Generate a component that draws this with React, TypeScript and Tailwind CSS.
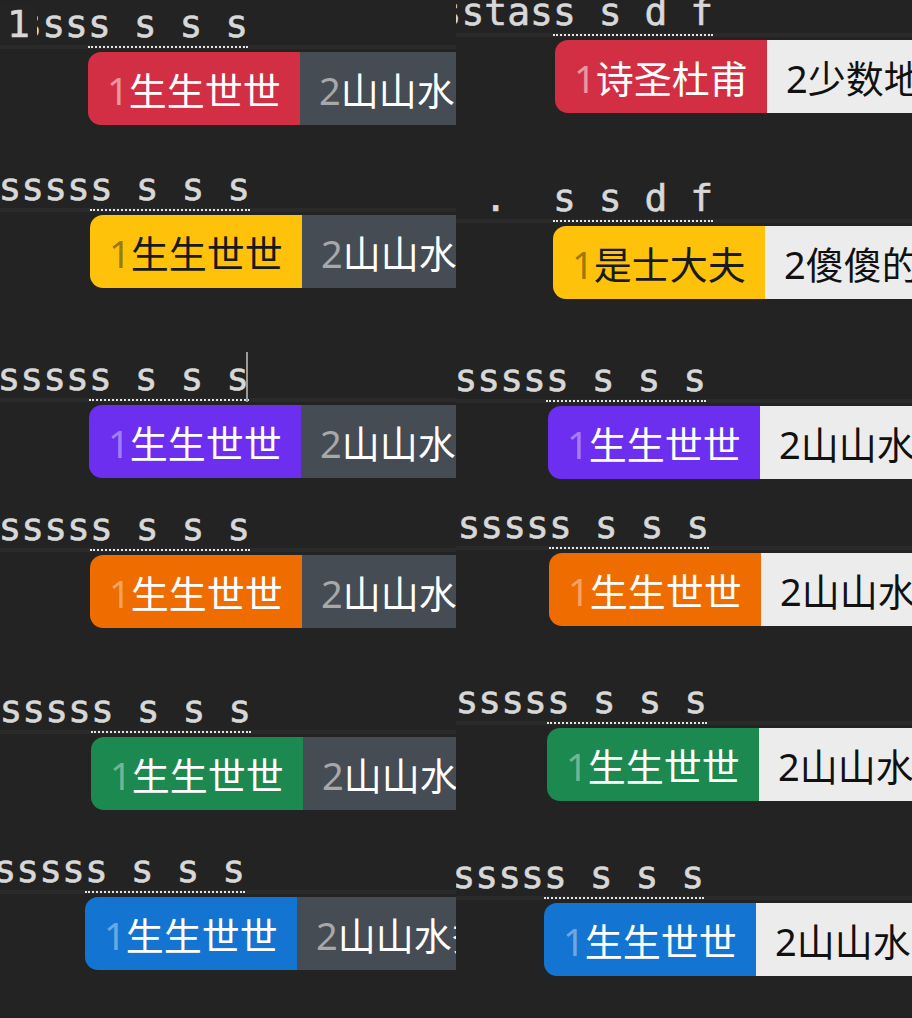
import React from 'react';

type Row = {
  gap: string;
  lead?: string;
  committed: string;
  preedit: string;
  textW: string;
  barX: string;
  hl: string;
  idx: string;
  word: string;
  first: string;
  second: string;
  cursor?: boolean;
};

const mono = { fontFamily: '"DejaVu Sans Mono", "Liberation Mono", monospace' };
const sans = { fontFamily: '"Noto Sans", "Noto Sans CJK SC", sans-serif' };

const left: Row[] = [
  { gap: 'mt-[5px]', lead: '1', committed: 'sss', preedit: 's s s s', textW: 'w-[51px]', barX: 'ml-[88px]', hl: 'bg-[#d32f44]', idx: 'text-white/50', word: 'text-white', first: '生生世世', second: '山山水秀' },
  { gap: 'mt-[43px]', committed: 'ssssss', preedit: 's s s s', textW: 'w-[90px]', barX: 'ml-[90px]', hl: 'bg-[#fec20b]', idx: 'text-black/40', word: 'text-[#1a1a1a]', first: '生生世世', second: '山山水秀' },
  { gap: 'mt-[70px]', committed: 'ssssss', preedit: 's s s s', textW: 'w-[89px]', barX: 'ml-[89px]', hl: 'bg-[#6c2ff0]', idx: 'text-white/40', word: 'text-white', first: '生生世世', second: '山山水秀', cursor: true },
  { gap: 'mt-[30px]', committed: 'ssssss', preedit: 's s s s', textW: 'w-[90px]', barX: 'ml-[90px]', hl: 'bg-[#ef6c00]', idx: 'text-white/40', word: 'text-white', first: '生生世世', second: '山山水秀' },
  { gap: 'mt-[62px]', committed: 'ssssss', preedit: 's s s s', textW: 'w-[91px]', barX: 'ml-[91px]', hl: 'bg-[#1c8951]', idx: 'text-white/40', word: 'text-white', first: '生生世世', second: '山山水秀' },
  { gap: 'mt-[40px]', committed: 'ssssss', preedit: 's s s s', textW: 'w-[85px]', barX: 'ml-[85px]', hl: 'bg-[#1375d1]', idx: 'text-white/40', word: 'text-white', first: '生生世世', second: '山山水秀' },
];

const right: Row[] = [
  { gap: '-mt-[7px]', committed: 'sstas', preedit: 's s d f', textW: 'w-[97px]', barX: 'ml-[99px]', hl: 'bg-[#d32f44]', idx: 'text-white/50', word: 'text-white', first: '诗圣杜甫', second: '少数地方' },
  { gap: 'mt-[66px]', committed: '.  ', preedit: 's s d f', textW: 'w-[97px]', barX: 'ml-[97px]', hl: 'bg-[#fec20b]', idx: 'text-black/40', word: 'text-[#1a1a1a]', first: '是士大夫', second: '傻傻的人' },
  { gap: 'mt-[60px]', committed: 'ssssss', preedit: 's s s s', textW: 'w-[90px]', barX: 'ml-[92px]', hl: 'bg-[#6c2ff0]', idx: 'text-white/40', word: 'text-white', first: '生生世世', second: '山山水秀' },
  { gap: 'mt-[27px]', committed: 'ssssss', preedit: 's s s s', textW: 'w-[93px]', barX: 'ml-[93px]', hl: 'bg-[#ef6c00]', idx: 'text-white/40', word: 'text-white', first: '生生世世', second: '山山水秀' },
  { gap: 'mt-[55px]', committed: 'ssssss', preedit: 's s s s', textW: 'w-[91px]', barX: 'ml-[91px]', hl: 'bg-[#1c8951]', idx: 'text-white/40', word: 'text-white', first: '生生世世', second: '山山水秀' },
  { gap: 'mt-[55px]', committed: 'ssssss', preedit: 's s s s', textW: 'w-[88px]', barX: 'ml-[88px]', hl: 'bg-[#1375d1]', idx: 'text-white/40', word: 'text-white', first: '生生世世', second: '山山水秀' },
];

function Cell({ row, light }: { row: Row; light: boolean }) {
  return (
    <div className={row.gap}>
      <div
        className="flex h-[38px] text-[38px] leading-[38px] text-[#d8d8d8] whitespace-pre [-webkit-text-stroke:0.6px_#d8d8d8]"
        style={mono}
      >
        {row.lead && <div className="w-[37px] shrink-0 pl-[7px] bg-[#242424]">{row.lead}</div>}
        <div className={`${row.textW} shrink-0 flex justify-end overflow-hidden`}>
          <span>{row.committed}</span>
        </div>
        <div className="relative shrink-0">
          <span className="border-b-2 border-dotted border-[#e4e4e4]">{row.preedit}</span>
          {row.cursor && <div className="absolute right-[1px] -top-[6px] h-[50px] w-[2px] bg-[#9a9a9a]" />}
        </div>
      </div>
      <div className="mt-[2px] h-[4px] bg-[#2a2a2a]" />
      <div className={`${row.barX} mt-[3px] flex h-[73px] text-[38px] leading-none`} style={sans}>
        <div className={`${row.hl} w-[212px] shrink-0 rounded-l-[13px] flex items-center pl-[19px] pt-[3px] whitespace-nowrap`}>
          <span className={row.idx}>1</span>
          <span className={row.word}>{row.first}</span>
        </div>
        <div
          className={`flex-1 min-w-0 overflow-hidden flex items-center pl-[19px] pt-[3px] whitespace-nowrap ${
            light ? 'bg-[#ececec]' : 'bg-[#454c54]'
          }`}
        >
          <span className={light ? 'text-[#111111]' : 'text-[#a8a8a8]'}>2</span>
          <span className={light ? 'text-[#111111]' : 'text-white'}>{row.second}</span>
        </div>
      </div>
    </div>
  );
}

export default function App() {
  return (
    <div className="w-[912px] h-[1018px] bg-[#232323] flex overflow-hidden">
      <div className="w-[456px] h-full overflow-hidden flex flex-col">
        {left.map((r, i) => (
          <Cell key={i} row={r} light={false} />
        ))}
      </div>
      <div className="w-[456px] h-full overflow-hidden flex flex-col">
        {right.map((r, i) => (
          <Cell key={i} row={r} light={true} />
        ))}
      </div>
    </div>
  );
}
